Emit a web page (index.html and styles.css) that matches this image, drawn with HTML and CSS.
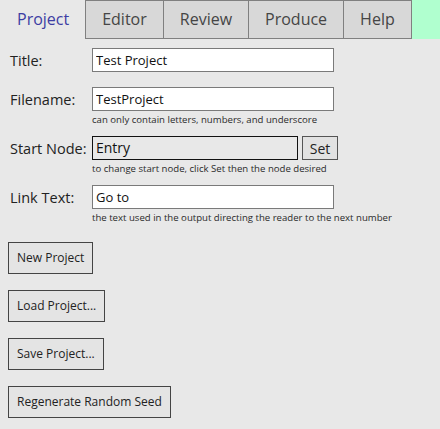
FILE: index.html
```html
<!DOCTYPE html>
<html lang="en">
<head>
    <meta charset="UTF-8">
    <meta name="viewport" content="width=device-width, initial-scale=1.0">
    <title>Project</title>
    <link rel="stylesheet" href="styles.css">
</head>
<body>
    <nav class="tabs">
        <div class="tab active">Project</div>
        <div class="tab">Editor</div>
        <div class="tab">Review</div>
        <div class="tab">Produce</div>
        <div class="tab">Help</div>
    </nav>

    <main class="project-pane">
        <div class="field field-plain">
            <div class="row">
                <label for="title">Title:</label>
                <input type="text" id="title" value="Test Project">
            </div>
        </div>

        <div class="field">
            <div class="row">
                <label for="filename">Filename:</label>
                <input type="text" id="filename" value="TestProject">
            </div>
            <div class="hint">can only contain letters, numbers, and underscore</div>
        </div>

        <div class="field">
            <div class="row">
                <label>Start Node:</label>
                <div class="node-box">Entry</div>
                <button class="set-button">Set</button>
            </div>
            <div class="hint">to change start node, click Set then the node desired</div>
        </div>

        <div class="field">
            <div class="row">
                <label for="link-text">Link Text:</label>
                <input type="text" id="link-text" value="Go to">
            </div>
            <div class="hint">the text used in the output directing the reader to the next number</div>
        </div>

        <div class="actions">
            <button>New Project</button>
            <button>Load Project...</button>
            <button>Save Project...</button>
            <button>Regenerate Random Seed</button>
        </div>
    </main>
</body>
</html>
```

FILE: styles.css
```css
body {
    font-family: 'Open Sans', 'Noto Sans', sans-serif;
    background-color: #e8e8e8;
    color: #222;
    margin: 0;
    padding: 0;
}
.tabs {
    display: flex;
    height: 39px;
    background-color: #b0ffcf;
}
.tab {
    padding: 0 16px;
    font-size: 16px;
    line-height: 37px;
    color: #454545;
    background-color: #d8d8d8;
    border: 1px solid #808080;
    border-right: none;
}
.tab:last-child {
    border-right: 1px solid #808080;
}
.tab.active {
    background-color: #e8e8e8;
    border-color: #e8e8e8;
    color: #3d3da3;
}
.project-pane {
    padding: 9px 8px;
}
.field {
    margin-bottom: 9px;
}
.field-plain {
    margin-bottom: 15px;
}
.row {
    display: flex;
    align-items: center;
    height: 24px;
}
.row label {
    width: 82px;
    padding-left: 2px;
    font-size: 14.5px;
}
.row input {
    box-sizing: border-box;
    width: 242px;
    height: 24px;
    margin: 0;
    padding: 0 3px;
    border: 1px solid #7a7a7a;
    background-color: #fff;
    font-family: 'Open Sans', sans-serif;
    font-size: 13px;
    color: #111;
    outline: none;
}
.node-box {
    box-sizing: border-box;
    width: 206px;
    height: 24px;
    padding: 0 3px;
    border: 1px solid #111;
    font-size: 14px;
    line-height: 22px;
    color: #111;
}
.set-button {
    box-sizing: border-box;
    width: 36px;
    height: 24px;
    margin-left: 4px;
    padding: 0;
    border: 1px solid #555;
    background-color: #e2e2e2;
    font-family: 'Open Sans', sans-serif;
    font-size: 14px;
    color: #222;
}
.hint {
    margin-top: 1px;
    padding-left: 84px;
    font-size: 9.6px;
    line-height: 15px;
    color: #2a2a2a;
}
.actions {
    display: flex;
    flex-direction: column;
    align-items: flex-start;
    gap: 16px;
    margin-top: 17px;
}
.actions button {
    padding: 7px 8px;
    border: 1px solid #444;
    background-color: #e4e4e4;
    font-family: 'Open Sans', sans-serif;
    font-size: 12px;
    line-height: 16px;
    color: #222;
}
```
